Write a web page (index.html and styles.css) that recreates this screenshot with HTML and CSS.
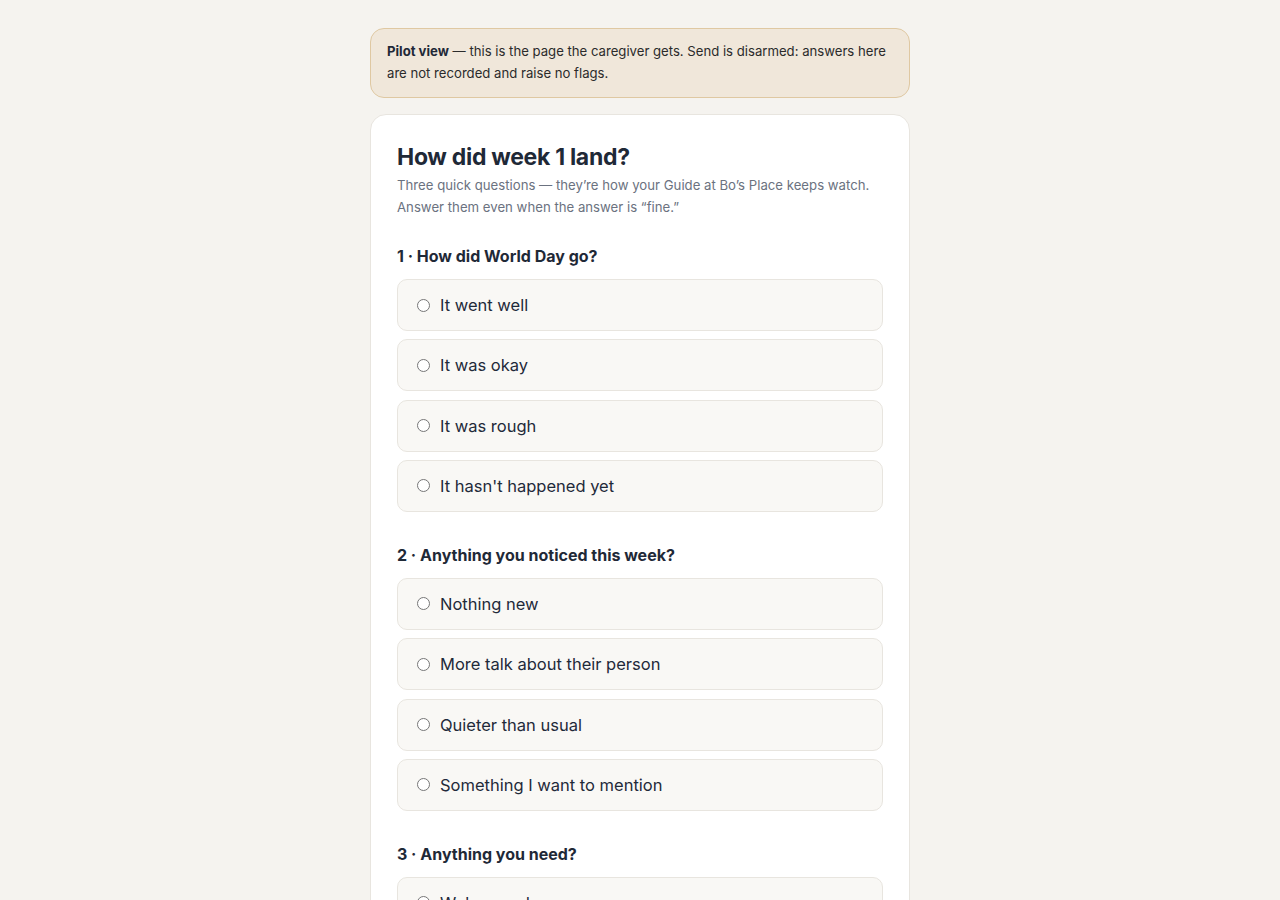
FILE: index.html
```html
<!DOCTYPE html>
<html lang="en">
  <head>
    <meta charset="UTF-8" />
    <meta name="viewport" content="width=device-width, initial-scale=1.0" />
    <title>Week 1 check-in</title>
    <link rel="stylesheet" href="styles.css">
  </head>
  <body>
    <main class="page">
      <div class="pilot-note">
        <strong>Pilot view</strong> — this is the page the caregiver gets. Send is disarmed: answers here
        are not recorded and raise no flags.
      </div>

      <form class="card">
        <h1>How did week 1 land?</h1>
        <p class="intro">
          Three quick questions — they’re how your Guide at Bo’s Place keeps watch.
          Answer them even when the answer is “fine.”
        </p>

        <fieldset class="question">
          <legend>1 · How did World Day go?</legend>
          <label class="option"><input type="radio" name="q1" /> It went well</label>
          <label class="option"><input type="radio" name="q1" /> It was okay</label>
          <label class="option"><input type="radio" name="q1" /> It was rough</label>
          <label class="option"><input type="radio" name="q1" /> It hasn't happened yet</label>
        </fieldset>

        <fieldset class="question">
          <legend>2 · Anything you noticed this week?</legend>
          <label class="option"><input type="radio" name="q2" /> Nothing new</label>
          <label class="option"><input type="radio" name="q2" /> More talk about their person</label>
          <label class="option"><input type="radio" name="q2" /> Quieter than usual</label>
          <label class="option"><input type="radio" name="q2" /> Something I want to mention</label>
        </fieldset>

        <fieldset class="question">
          <legend>3 · Anything you need?</legend>
          <label class="option"><input type="radio" name="q3" /> We're good</label>
          <label class="option"><input type="radio" name="q3" /> A call from our Guide</label>
          <label class="option"><input type="radio" name="q3" /> Ideas for at-home activities</label>
        </fieldset>
      </form>
    </main>
  </body>
</html>
```

FILE: styles.css
```css
body {
  margin: 0;
  background-color: #f5f3ef;
  color: #1f2937;
  font-family: Inter, "Noto Sans", sans-serif;
}

.page {
  width: 540px;
  margin: 0 auto;
  padding-top: 28px;
}

.pilot-note {
  background-color: #f0e7da;
  border: 1px solid #dfc8a2;
  border-radius: 14px;
  padding: 11px 16px 13px;
  font-size: 13.15px;
  line-height: 22px;
  color: #2b2b2b;
}

.pilot-note strong {
  color: #1f2937;
}

.card {
  margin-top: 16px;
  background-color: #ffffff;
  border: 1px solid #e8e5df;
  border-radius: 16px;
  padding: 26px 26px 40px;
}

h1 {
  margin: 0;
  font-size: 23px;
  line-height: 32px;
  font-weight: 700;
  color: #1f2937;
  letter-spacing: -0.3px;
}

.intro {
  margin: 1px 0 0;
  font-size: 13.2px;
  line-height: 22px;
  color: #6b7280;
}

.question {
  border: none;
  margin: 27px 0 0;
  padding: 0;
  display: flex;
  flex-direction: column;
  gap: 8.33px;
}

.question + .question {
  margin-top: 32px;
}

.question legend {
  padding: 0;
  margin-bottom: 12px;
  font-size: 16px;
  line-height: 22px;
  font-weight: 700;
  color: #1f2937;
}

.option {
  display: flex;
  align-items: center;
  gap: 10px;
  height: 50px;
  padding: 0 19px;
  background-color: #f9f8f5;
  border: 1px solid #e8e5df;
  border-radius: 10px;
  font-size: 16.5px;
  color: #1f2a3a;
  cursor: pointer;
}

.option input {
  margin: 0;
  width: 13px;
  height: 13px;
}
```
